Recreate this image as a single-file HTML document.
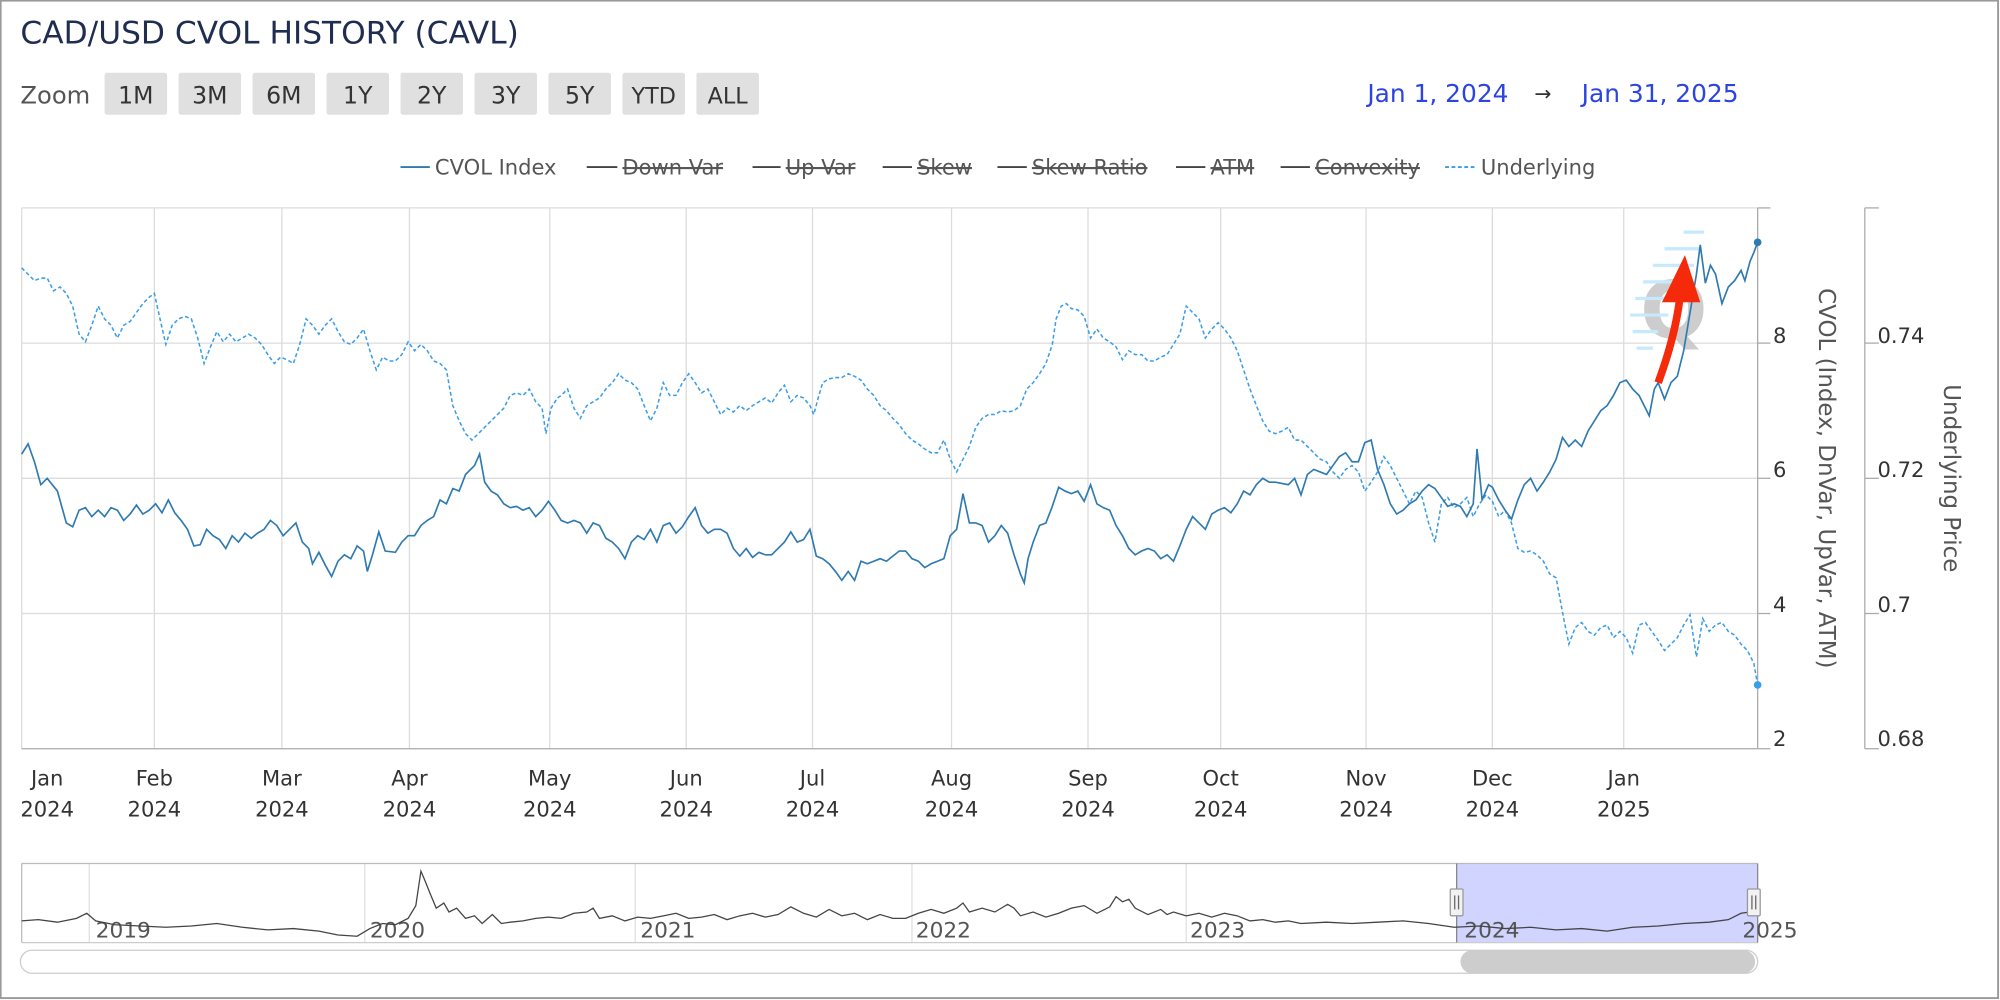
<!DOCTYPE html>
<html><head><meta charset="utf-8"><style>
html,body{margin:0;padding:0;background:#fff;width:2000px;height:1000px;overflow:hidden}
svg{display:block}
text{font-family:"DejaVu Sans","Liberation Sans",sans-serif}
</style></head><body>
<svg width="2000" height="1000" viewBox="0 0 1568 784" preserveAspectRatio="none" xmlns="http://www.w3.org/2000/svg">
<rect x="0.5" y="0.5" width="1566" height="782" fill="#fff" stroke="#9a9a9a" stroke-width="1.5"/>
<text x="16" y="34" font-size="24.5" fill="#1f2d50">CAD/USD CVOL HISTORY (CAVL)</text>
<text x="16" y="81" font-size="19" fill="#555">Zoom</text>
<g font-size="18.5" fill="#333" text-anchor="middle">
<rect x="82" y="57" width="49" height="33" rx="2" fill="#e0e0e0"/><text x="106.5" y="81">1M</text>
<rect x="140" y="57" width="49" height="33" rx="2" fill="#e0e0e0"/><text x="164.5" y="81">3M</text>
<rect x="198" y="57" width="49" height="33" rx="2" fill="#e0e0e0"/><text x="222.5" y="81">6M</text>
<rect x="256" y="57" width="49" height="33" rx="2" fill="#e0e0e0"/><text x="280.5" y="81">1Y</text>
<rect x="314" y="57" width="49" height="33" rx="2" fill="#e0e0e0"/><text x="338.5" y="81">2Y</text>
<rect x="372" y="57" width="49" height="33" rx="2" fill="#e0e0e0"/><text x="396.5" y="81">3Y</text>
<rect x="430" y="57" width="49" height="33" rx="2" fill="#e0e0e0"/><text x="454.5" y="81">5Y</text>
<rect x="488" y="57" width="49" height="33" rx="2" fill="#e0e0e0"/><text x="512.5" y="81" font-size="17.5">YTD</text>
<rect x="546" y="57" width="49" height="33" rx="2" fill="#e0e0e0"/><text x="570.5" y="81" font-size="17.5">ALL</text>
</g>
<g font-size="19.5" fill="#2c44e0">
<text x="1072" y="80">Jan 1, 2024</text><text x="1240" y="80">Jan 31, 2025</text>
</g>
<text x="1203" y="79" font-size="16" fill="#333">→</text>
<g font-size="16.5" fill="#555">
<line x1="314" y1="131" x2="337" y2="131" stroke="#2f7ab0" stroke-width="1.5"/><text x="341" y="137">CVOL Index</text>
<line x1="460" y1="131" x2="484" y2="131" stroke="#444" stroke-width="1.5"/><text x="488" y="137" text-decoration="line-through">Down Var</text>
<line x1="590" y1="131" x2="612" y2="131" stroke="#444" stroke-width="1.5"/><text x="616" y="137" text-decoration="line-through">Up Var</text>
<line x1="692" y1="131" x2="715" y2="131" stroke="#444" stroke-width="1.5"/><text x="719" y="137" text-decoration="line-through">Skew</text>
<line x1="782" y1="131" x2="805" y2="131" stroke="#444" stroke-width="1.5"/><text x="809" y="137" text-decoration="line-through">Skew Ratio</text>
<line x1="922" y1="131" x2="945" y2="131" stroke="#444" stroke-width="1.5"/><text x="949" y="137" text-decoration="line-through">ATM</text>
<line x1="1004" y1="131" x2="1027" y2="131" stroke="#444" stroke-width="1.5"/><text x="1031" y="137" text-decoration="line-through">Convexity</text>
<line x1="1133" y1="131" x2="1157" y2="131" stroke="#3a9de8" stroke-width="1.5" stroke-dasharray="3,2"/><text x="1161" y="137">Underlying</text>
</g>
<g stroke="#dcdcdc" stroke-width="1">
<line x1="17" y1="163" x2="1378" y2="163"/><line x1="17" y1="269" x2="1378" y2="269"/><line x1="17" y1="375" x2="1378" y2="375"/><line x1="17" y1="481" x2="1378" y2="481"/>
<line x1="121" y1="163" x2="121" y2="587"/><line x1="221" y1="163" x2="221" y2="587"/><line x1="321" y1="163" x2="321" y2="587"/><line x1="431" y1="163" x2="431" y2="587"/><line x1="538" y1="163" x2="538" y2="587"/><line x1="637" y1="163" x2="637" y2="587"/><line x1="746" y1="163" x2="746" y2="587"/><line x1="853" y1="163" x2="853" y2="587"/><line x1="957" y1="163" x2="957" y2="587"/><line x1="1071" y1="163" x2="1071" y2="587"/><line x1="1170" y1="163" x2="1170" y2="587"/><line x1="1273" y1="163" x2="1273" y2="587"/>
<line x1="17" y1="163" x2="17" y2="587"/>
</g>
<line x1="17" y1="587" x2="1378" y2="587" stroke="#aaa"/>
<line x1="1378" y1="163" x2="1378" y2="587" stroke="#aaa"/>
<g stroke="#aaa"><line x1="1378" y1="163" x2="1388" y2="163"/><line x1="1378" y1="269" x2="1388" y2="269"/><line x1="1378" y1="375" x2="1388" y2="375"/><line x1="1378" y1="481" x2="1388" y2="481"/><line x1="1378" y1="587" x2="1388" y2="587"/>
<line x1="1462" y1="163" x2="1462" y2="587"/><line x1="1462" y1="163" x2="1473" y2="163"/><line x1="1462" y1="269" x2="1473" y2="269"/><line x1="1462" y1="375" x2="1473" y2="375"/><line x1="1462" y1="481" x2="1473" y2="481"/><line x1="1462" y1="587" x2="1473" y2="587"/></g>
<g font-size="16.5" fill="#333">
<text x="1390" y="269">8</text><text x="1390" y="374">6</text><text x="1390" y="480">4</text><text x="1390" y="585">2</text>
<text x="1472" y="269">0.74</text><text x="1472" y="374">0.72</text><text x="1472" y="480">0.7</text><text x="1472" y="585">0.68</text>
</g>
<text transform="translate(1426,375) rotate(90)" text-anchor="middle" font-size="18" fill="#555">CVOL (Index, DnVar, UpVar, ATM)</text>
<text transform="translate(1524,375) rotate(90)" text-anchor="middle" font-size="18" fill="#555">Underlying Price</text>
<g font-size="16.5" fill="#333" text-anchor="middle">
<text x="37" y="616">Jan</text><text x="37" y="640">2024</text>
<text x="121" y="616">Feb</text><text x="121" y="640">2024</text>
<text x="221" y="616">Mar</text><text x="221" y="640">2024</text>
<text x="321" y="616">Apr</text><text x="321" y="640">2024</text>
<text x="431" y="616">May</text><text x="431" y="640">2024</text>
<text x="538" y="616">Jun</text><text x="538" y="640">2024</text>
<text x="637" y="616">Jul</text><text x="637" y="640">2024</text>
<text x="746" y="616">Aug</text><text x="746" y="640">2024</text>
<text x="853" y="616">Sep</text><text x="853" y="640">2024</text>
<text x="957" y="616">Oct</text><text x="957" y="640">2024</text>
<text x="1071" y="616">Nov</text><text x="1071" y="640">2024</text>
<text x="1170" y="616">Dec</text><text x="1170" y="640">2024</text>
<text x="1273" y="616">Jan</text><text x="1273" y="640">2025</text>
</g>
<text x="1286" y="265" font-size="62" font-weight="bold" fill="#c8c8c8" opacity="0.9">Q</text>
<g stroke="#c6e9fb" stroke-width="2.5"><line x1="1320" y1="182" x2="1336" y2="182"/><line x1="1305" y1="195" x2="1332" y2="195"/><line x1="1296" y1="208" x2="1328" y2="208"/><line x1="1288" y1="221" x2="1322" y2="221"/><line x1="1282" y1="234" x2="1316" y2="234"/><line x1="1278" y1="247" x2="1308" y2="247"/><line x1="1280" y1="260" x2="1300" y2="260"/><line x1="1283" y1="273" x2="1296" y2="273"/></g>
<polyline fill="none" stroke="#3a9de8" stroke-width="1.2" stroke-dasharray="3,2" points="17,210 22,215 27,220 32,218 37,218 42,228 47,225 52,230 57,240 62,262 67,268 72,255 77,240 82,250 87,255 92,265 97,255 102,252 107,245 112,238 117,233 121,230 125,248 130,270 135,255 140,250 145,248 150,250 155,265 160,285 165,272 170,260 175,268 180,262 185,268 190,265 195,262 200,265 205,270 210,278 215,285 220,280 225,282 230,285 235,270 240,250 245,255 250,262 255,255 260,250 265,260 270,268 275,270 280,265 285,258 290,275 295,290 300,280 305,283 310,283 315,278 320,268 325,275 330,270 335,275 340,283 345,285 350,290 355,318 360,330 365,340 370,345 375,340 380,335 385,330 390,325 395,320 400,310 405,308 410,310 415,305 420,315 425,320 428,340 432,320 437,312 440,310 445,305 450,320 455,328 460,318 465,315 470,312 475,305 480,300 485,293 490,298 495,300 500,305 505,318 510,330 515,320 520,300 525,310 530,310 535,300 540,293 545,300 550,308 555,305 560,315 565,325 570,320 575,323 580,318 585,322 590,318 595,315 600,312 605,316 610,308 615,302 620,315 625,310 630,312 635,318 638,325 642,310 645,300 650,297 655,296 660,296 665,293 670,295 675,298 680,305 685,310 690,318 695,322 700,328 705,333 710,340 715,345 720,348 725,352 730,355 735,355 740,345 745,360 750,370 755,360 760,350 765,335 770,328 775,325 780,325 785,322 790,323 795,322 800,318 805,305 810,300 815,293 820,285 825,270 828,250 832,240 836,238 840,242 845,243 850,248 855,265 860,258 865,265 870,268 875,272 880,282 885,275 890,278 895,278 900,283 905,283 910,280 915,278 920,270 925,262 930,240 935,245 940,250 945,265 950,258 955,253 960,258 965,265 970,275 975,290 980,305 985,318 990,330 995,338 1000,340 1005,338 1010,335 1015,345 1020,345 1025,350 1030,355 1035,360 1040,362 1045,370 1050,375 1055,368 1060,365 1065,370 1070,385 1075,378 1080,370 1085,358 1090,365 1095,375 1100,385 1105,395 1110,385 1115,390 1120,410 1125,425 1130,395 1135,390 1140,398 1145,395 1150,390 1155,405 1160,395 1165,388 1170,393 1175,405 1180,400 1185,410 1190,430 1195,433 1200,432 1205,435 1210,440 1215,450 1220,453 1225,480 1230,505 1235,492 1240,488 1245,495 1250,498 1255,492 1260,490 1265,500 1270,495 1275,500 1280,512 1285,490 1290,488 1295,495 1300,502 1305,510 1310,505 1315,500 1320,490 1325,482 1330,515 1335,485 1340,495 1345,490 1350,488 1355,495 1360,498 1365,505 1370,510 1375,520 1378,537"/>
<circle cx="1378" cy="537" r="3" fill="#3a9de8"/>
<polyline fill="none" stroke="#2f7ab0" stroke-width="1.3" points="17,356 22,348 27,362 32,380 37,375 45,385 52,410 57,413 62,400 67,398 72,405 77,400 82,405 87,398 92,400 97,408 102,403 107,396 112,403 117,400 122,395 127,402 132,392 137,402 142,408 147,415 152,428 157,427 162,415 167,420 172,423 177,430 182,420 187,425 192,418 197,422 202,418 207,415 212,408 217,412 222,420 227,415 232,410 237,425 242,430 245,442 250,433 255,443 260,452 265,440 270,435 275,438 280,428 285,432 288,448 292,435 297,417 302,432 310,433 315,425 320,420 325,420 330,412 335,408 340,405 345,392 350,395 355,383 360,385 365,372 372,365 376,356 380,378 385,385 390,388 395,395 400,398 405,397 410,400 415,398 420,405 425,400 430,393 435,400 440,408 445,410 450,408 455,410 460,418 465,410 470,412 475,422 480,425 485,430 490,438 495,425 500,420 505,423 510,415 515,425 520,412 525,410 530,418 535,413 540,405 545,398 550,412 555,418 560,415 565,415 570,418 575,430 580,436 585,430 590,437 595,433 600,435 605,435 610,430 615,425 620,417 625,425 630,423 635,415 640,436 645,438 650,442 655,448 660,455 665,448 670,455 675,440 680,442 685,440 690,438 695,440 700,436 705,432 710,432 715,438 720,440 725,445 730,442 735,440 740,438 745,420 750,415 755,387 760,410 765,410 770,412 775,425 780,420 785,412 790,418 795,435 800,450 803,457 806,438 810,425 815,412 820,410 825,397 830,382 835,385 840,387 845,385 850,393 855,380 860,395 865,398 870,400 875,412 880,420 885,430 890,435 895,432 900,430 905,432 910,438 915,435 920,440 925,428 930,415 935,405 940,410 945,415 950,403 955,400 960,398 965,402 970,395 975,385 980,388 985,380 990,375 995,378 1000,378 1010,380 1015,375 1020,388 1025,372 1030,368 1035,370 1040,372 1045,365 1050,358 1055,355 1060,362 1065,362 1070,347 1075,345 1080,368 1085,380 1090,395 1095,403 1100,400 1105,395 1110,392 1115,385 1120,380 1125,383 1130,390 1135,397 1140,395 1145,397 1150,405 1155,395 1158,352 1162,392 1167,380 1170,382 1175,392 1180,400 1185,407 1190,392 1195,380 1200,375 1205,385 1210,378 1215,370 1220,360 1225,343 1230,350 1235,345 1240,350 1245,338 1250,330 1255,322 1260,318 1265,310 1270,300 1275,298 1280,305 1285,310 1290,320 1293,326 1297,305 1300,300 1305,313 1310,300 1315,295 1320,275 1325,245 1330,215 1333,192 1337,222 1341,208 1345,215 1350,238 1355,225 1360,220 1365,212 1368,220 1372,205 1375,198 1378,190"/>
<circle cx="1378" cy="190" r="3" fill="#2f7ab0"/>
<path d="M1300,300 Q1313,265 1317,234" fill="none" stroke="#f42a0a" stroke-width="6"/>
<polygon points="1321,200 1303,237 1333,237" fill="#f42a0a"/>
<rect x="1142" y="677" width="236" height="62" fill="#d0d4ff"/>
<g stroke="#e0e0e0"><line x1="70" y1="677" x2="70" y2="739"/><line x1="286" y1="677" x2="286" y2="739"/><line x1="498" y1="677" x2="498" y2="739"/><line x1="715" y1="677" x2="715" y2="739"/><line x1="930" y1="677" x2="930" y2="739"/></g>
<line x1="17" y1="677" x2="1378" y2="677" stroke="#bbb"/>
<line x1="17" y1="739" x2="1378" y2="739" stroke="#ccc"/>
<line x1="17" y1="677" x2="17" y2="739" stroke="#bbb"/>
<line x1="1378" y1="677" x2="1378" y2="739" stroke="#888"/>
<line x1="1142" y1="677" x2="1142" y2="739" stroke="#888"/>
<g font-size="17" fill="#555">
<text x="75" y="735">2019</text><text x="290" y="735">2020</text><text x="502" y="735">2021</text><text x="718" y="735">2022</text><text x="933" y="735">2023</text><text x="1148" y="735">2024</text><text x="1366" y="735">2025</text>
</g>
<polyline fill="none" stroke="#444" stroke-width="1" points="17,722 30,721 45,723 60,720 68,716 75,722 90,725 110,726 130,727 150,726 170,724 190,727 210,729 230,728 250,730 265,733 280,734 290,728 300,724 310,725 320,720 326,710 330,683 333,690 337,700 342,712 348,708 352,715 358,712 365,720 372,718 378,724 386,717 393,724 400,723 410,722 420,720 430,719 440,720 450,716 460,715 465,712 470,720 480,718 490,722 500,719 510,720 520,718 530,716 540,720 550,719 560,717 570,721 580,718 590,716 600,719 610,717 620,711 630,716 640,719 650,713 660,718 670,716 680,721 690,717 700,720 710,720 720,716 730,713 740,716 750,712 755,708 760,715 770,712 780,715 790,709 795,712 800,718 810,715 820,719 830,716 840,712 850,710 860,716 870,711 875,703 880,707 885,705 890,712 900,717 910,713 915,717 920,715 930,718 940,716 950,719 960,716 970,718 980,722 990,721 1000,723 1010,722 1020,724 1040,723 1060,724 1080,723 1100,722 1120,724 1140,727 1160,726 1180,728 1200,727 1220,729 1240,728 1260,730 1280,727 1300,726 1320,724 1340,723 1355,721 1365,716 1372,715 1378,713"/>
<g fill="#f2f2f2" stroke="#999"><rect x="1137" y="697" width="10" height="21" rx="1"/><rect x="1370" y="697" width="10" height="21" rx="1"/></g>
<g stroke="#666"><line x1="1140.5" y1="702" x2="1140.5" y2="713"/><line x1="1143.5" y1="702" x2="1143.5" y2="713"/><line x1="1373.5" y1="702" x2="1373.5" y2="713"/><line x1="1376.5" y1="702" x2="1376.5" y2="713"/></g>
<rect x="16" y="745" width="1362" height="18" rx="9" fill="#fff" stroke="#ccc"/>
<rect x="1145" y="745" width="231" height="18" rx="9" fill="#cdcdcd"/>
</svg>
</body></html>
